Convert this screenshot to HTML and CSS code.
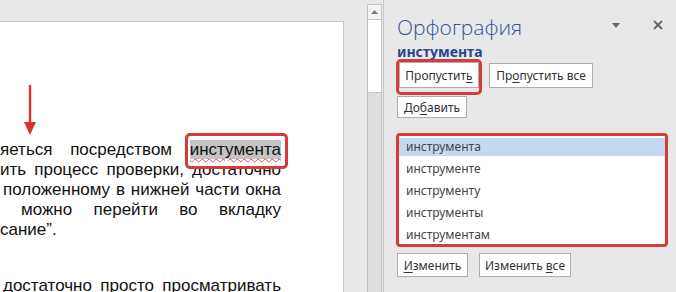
FILE: index.html
```html
<!DOCTYPE html>
<html>
<head>
  <meta charset="UTF-8">
  <title>Орфография</title>
<link rel="stylesheet" href="styles.css">
</head>
<body>

  <div class="window">
    <!-- документ -->
    <div class="doc">
      <div class="doc-area">
        <div class="page">
          <svg class="arrow" width="12" height="50" viewBox="0 0 12 50">
            <line x1="6" y1="0" x2="6" y2="40" stroke="#d8322f" stroke-width="2.4"/>
            <polygon points="0,37 12,37 6,50" fill="#d8322f"/>
          </svg>
          <div class="para">
            <div class="line">яеться посредством <span class="mark"><span class="err">инстумента</span></span></div>
            <div class="line">ить процесс проверки, достаточно</div>
            <div class="line shift3">положенному в нижней части окна</div>
            <div class="line shift21">можно перейти во вкладку</div>
            <div class="line last">сание”.</div>
          </div>
          <div class="para second">
            <div class="line shift3">достаточно просто просматривать</div>
          </div>
        </div>
      </div>
      <div class="scrollbar">
        <div class="scroll-up">
          <svg width="7" height="4" viewBox="0 0 7 4"><polygon points="0,4 7,4 3.5,0" fill="#7a7a7a"/></svg>
        </div>
        <div class="scroll-thumb"></div>
      </div>
    </div>

    <!-- панель орфографии -->
    <div class="pane">
      <div class="pane-head">
        <div class="pane-title">Орфография</div>
        <svg class="icon-menu" width="8" height="5" viewBox="0 0 8 5"><polygon points="0,0 8,0 4,5" fill="#6a6a6a"/></svg>
        <svg class="icon-close" width="10" height="10" viewBox="0 0 10 10">
          <line x1="1" y1="1" x2="9" y2="9" stroke="#666" stroke-width="1.8"/>
          <line x1="9" y1="1" x2="1" y2="9" stroke="#666" stroke-width="1.8"/>
        </svg>
      </div>
      <div class="bad-word">инстумента</div>

      <div class="btn-row">
        <span class="red-box"><button class="btn skip">Пропустит<u>ь</u></button></span>
        <button class="btn skip-all">Пр<u>о</u>пустить все</button>
      </div>
      <div class="btn-row">
        <button class="btn add">До<u>б</u>авить</button>
      </div>

      <div class="suggestions">
        <div class="item selected">инструмента</div>
        <div class="item">инструменте</div>
        <div class="item">инструменту</div>
        <div class="item">инструменты</div>
        <div class="item">инструментам</div>
      </div>

      <div class="btn-row bottom">
        <button class="btn change"><u>И</u>зменить</button>
        <button class="btn change-all">Изменить <u>в</u>се</button>
      </div>
    </div>
  </div>

</body>
</html>
```

FILE: styles.css
```css
html, body {
  margin: 0;
  padding: 0;
  width: 676px;
  height: 292px;
  overflow: hidden;
}
.window {
  display: flex;
  height: 292px;
  background: #e8e8e8;
}

/* документ */
.doc {
  width: 383px;
  display: flex;
  flex-shrink: 0;
}
.doc-area {
  width: 344px;
  padding: 21px 23px 0 0;
  display: flex;
}
.page {
  flex: 1;
  background: white;
  border-top: 1px solid #c6c6c6;
  border-right: 1px solid #c6c6c6;
  font-family: "Liberation Sans", Arial, sans-serif;
  font-size: 17px;
  line-height: 20px;
  color: #111;
}
.arrow {
  display: block;
  margin: 63px 0 0 24px;
}
.para {
  width: 281px;
  margin-top: 5px;
}
.para.second {
  margin-top: 36px;
}
.line {
  text-align: justify;
  text-align-last: justify;
  white-space: nowrap;
}
.line.last {
  text-align-last: left;
}
.shift3 {
  padding-left: 3px;
}
.shift21 {
  padding-left: 21px;
}
.mark {
  position: relative;
  background: #c4c4c4;
}
.mark::after {
  content: "";
  position: absolute;
  left: -5px;
  right: -7px;
  top: -7px;
  bottom: -10px;
  border: 3px solid #d73a3a;
  border-radius: 5px;
}
.err {
  text-decoration: underline wavy #e04a48;
  text-decoration-thickness: 1px;
  text-underline-offset: 3px;
}

.scrollbar {
  width: 13px;
  margin-top: 4px;
  border-left: 1px solid #c4c4c4;
  border-right: 1px solid #c4c4c4;
  background: #dedede;
}
.scroll-up {
  height: 14px;
  background: #f4f4f4;
  border-top: 1px solid #c4c4c4;
  display: flex;
  justify-content: center;
  align-items: center;
}
.scroll-thumb {
  height: 72px;
  background: white;
  border-top: 1px solid #c4c4c4;
  border-bottom: 1px solid #c4c4c4;
}

/* панель */
.pane {
  flex: 1;
  border-left: 1px solid #c8c8c8;
  padding: 13px 8px 0 12px;
  font-family: "Noto Sans", "Open Sans", sans-serif;
}
.pane-head {
  display: flex;
  align-items: flex-start;
  height: 28px;
}
.pane-title {
  flex: 1;
  font-family: "Open Sans", "Noto Sans", sans-serif;
  font-size: 21px;
  font-weight: 300;
  line-height: 28px;
  color: #2b5797;
  padding-left: 1px;
}
.icon-menu {
  margin: 10px 33px 0 0;
}
.icon-close {
  margin: 7px 5px 0 0;
}
.bad-word {
  margin-top: 3px;
  font-size: 14px;
  font-weight: bold;
  line-height: 15px;
  color: #24498f;
  padding-left: 1px;
}
.btn-row {
  display: flex;
  align-items: flex-start;
  gap: 7px;
}
.red-box {
  display: flex;
  border: 3px solid #d73a3a;
  border-radius: 5px;
  padding-bottom: 4px;
}
.btn {
  font-family: "Noto Sans", "Open Sans", sans-serif;
  font-size: 12px;
  color: #333;
  background: white;
  border: 1px solid #adadad;
  border-radius: 0;
  padding: 0;
  margin: 0;
}
.btn u {
  text-underline-offset: 2px;
}
.skip {
  width: 80px;
  height: 26px;
}
.skip-all {
  width: 104px;
  height: 25px;
  margin-top: 4px;
}
.add {
  width: 70px;
  height: 22px;
  margin: 1px 0 0 1px;
}
.suggestions {
  margin-top: 15px;
  height: 106px;
  padding-top: 2px;
  background: white;
  border: 3px solid #d73a3a;
  border-radius: 4px;
}
.item {
  height: 18px;
  line-height: 18px;
  margin-bottom: 4px;
  padding-left: 7px;
  font-size: 12px;
  color: #444;
}
.item.selected {
  background: #c6d8f0;
}
.btn-row.bottom {
  margin-top: 6px;
  gap: 11px;
}
.change {
  width: 71px;
  height: 24px;
  margin-left: 1px;
}
.change-all {
  width: 92px;
  height: 24px;
}
```
